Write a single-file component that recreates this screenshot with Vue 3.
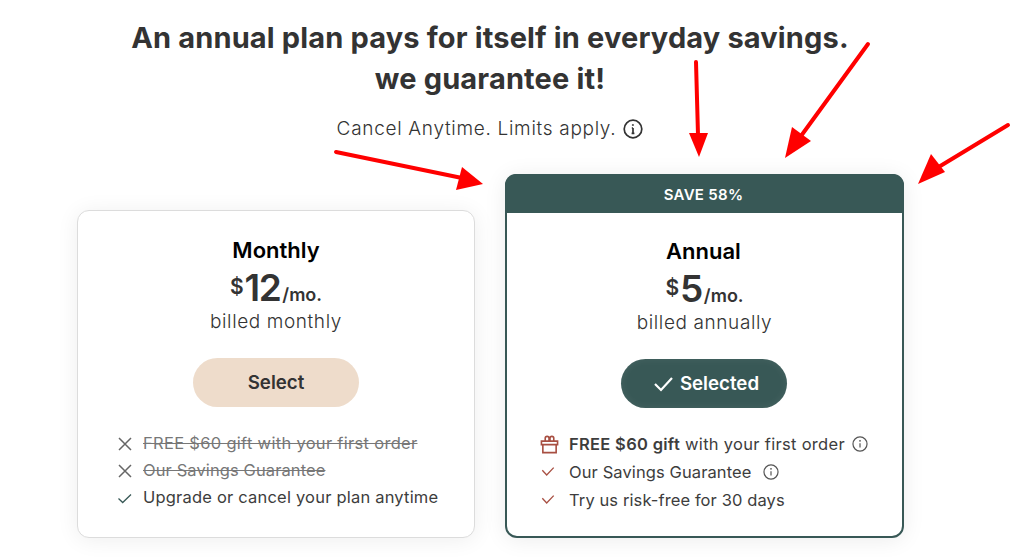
<script setup>
const monthly = [
  { icon: 'x', text: 'FREE $60 gift with your first order', cls: 'off' },
  { icon: 'x', text: 'Our Savings Guarantee', cls: 'off tight' },
  { icon: 'check', text: 'Upgrade or cancel your plan anytime', cls: 'mid' },
]
const arrows = [
  { line: 'M336 152 L462 178', head: '483,184 456,190 462,167' },
  { line: 'M696 62 L698 135', head: '699,157 689,133 708,133' },
  { line: 'M868 44 L801 136', head: '785,158 792,127 811,141' },
  { line: 'M1008 125 L937 168', head: '918,184 931,154 945,172' },
]
</script>

<template>
  <main class="page">
    <header class="intro">
      <h1>An annual plan pays for itself in everyday savings.<br />we guarantee it!</h1>
      <p class="limits">
        Cancel Anytime. Limits apply.
        <svg class="info big" viewBox="0 0 20 20"><circle cx="10" cy="10" r="8.8" /><path d="M10 9v5.4M8.6 14.4h2.8M8.8 9h1.2" /><circle class="dot" cx="9.9" cy="6" r="1.1" /></svg>
      </p>
    </header>

    <section class="plans">
      <article class="card monthly">
        <h2>Monthly</h2>
        <div class="price"><sup>$</sup><b>12</b><span>/mo.</span></div>
        <p class="billed">billed monthly</p>
        <button class="btn select">Select</button>
        <ul class="features">
          <li v-for="item in monthly" :key="item.text" :class="item.cls">
            <svg v-if="item.icon === 'x'" class="ico" viewBox="0 0 16 16"><path class="x" d="M2 2l12 12M14 2L2 14" /></svg>
            <svg v-else class="ico" viewBox="0 0 16 16"><path class="tick-green" d="M1.5 8.5l4.2 4L14 4.5" /></svg>
            <span>{{ item.text }}</span>
          </li>
        </ul>
      </article>

      <article class="card annual">
        <div class="save">SAVE 58%</div>
        <h2>Annual</h2>
        <div class="price"><sup>$</sup><b>5</b><span>/mo.</span></div>
        <p class="billed">billed annually</p>
        <button class="btn selected">
          <svg class="btn-tick" viewBox="0 0 20 16"><path d="M1.5 8l6 6L18.5 2" /></svg>
          Selected
        </button>
        <ul class="features red">
          <li>
            <svg class="ico gift" viewBox="0 0 20 20"><path d="M1.5 6.5h17v3.6h-17zM3 10.1v8.4h14v-8.4M5.5 6.5V3.5a2 2 0 0 1 4 0v3M10.5 6.5v-3a2 2 0 0 1 4 0v3" /></svg>
            <span><strong>FREE $60 gift</strong> with your first order</span>
            <svg class="info" viewBox="0 0 20 20"><circle cx="10" cy="10" r="8.8" /><path d="M10 9v5.5" /><circle class="dot" cx="10" cy="6" r="1.1" /></svg>
          </li>
          <li class="tight">
            <svg class="ico" viewBox="0 0 16 16"><path class="tick-red" d="M1.5 6l5 5.5L14.5 3" /></svg>
            <span>Our Savings Guarantee</span>
            <svg class="info wide" viewBox="0 0 20 20"><circle cx="10" cy="10" r="8.8" /><path d="M10 9v5.5" /><circle class="dot" cx="10" cy="6" r="1.1" /></svg>
          </li>
          <li class="tight">
            <svg class="ico" viewBox="0 0 16 16"><path class="tick-red" d="M1.5 6l5 5.5L14.5 3" /></svg>
            <span>Try us risk-free for 30 days</span>
          </li>
        </ul>
      </article>
    </section>

    <svg class="arrows" viewBox="0 0 1024 557">
      <g v-for="a in arrows" :key="a.line">
        <path :d="a.line" />
        <polygon :points="a.head" />
      </g>
    </svg>
  </main>
</template>

<style>
html, body { margin: 0; background: #fff; }
</style>

<style scoped>
.page {
  position: relative;
  width: 1024px;
  height: 557px;
  overflow: hidden;
  background: #fff;
  color: #333;
  font-family: Inter, "Liberation Sans", sans-serif;
}
.intro { width: 980px; text-align: center; padding-top: 17px; }
h1 {
  margin: 0;
  font-size: 29px;
  line-height: 41px;
  font-weight: 700;
  letter-spacing: 0.15px;
  color: #333;
}
.limits {
  margin: 18px 0 0;
  font-size: 19px;
  line-height: 24px;
  font-weight: 300;
  letter-spacing: 0.7px;
  display: flex;
  justify-content: center;
  align-items: center;
  gap: 7px;
}
.info { width: 16px; height: 16px; flex: none; fill: none; stroke: #555; stroke-width: 1.5; margin-left: 7px; }
.info.big { width: 20px; height: 20px; stroke: #333; stroke-width: 1.7; margin-left: 0; }
.info.wide { margin-left: 12px; }
.dot { fill: #555; stroke: none; }
.plans {
  position: absolute;
  left: 77px;
  bottom: 19px;
  display: flex;
  align-items: flex-end;
  gap: 30px;
}
.card {
  box-sizing: border-box;
  background: #fff;
  border-radius: 12px;
  text-align: center;
  display: flex;
  flex-direction: column;
  align-items: center;
}
.monthly {
  width: 398px;
  height: 328px;
  border: 1px solid #dcdcdc;
  box-shadow: 0 2px 22px rgba(0, 0, 0, 0.07);
  padding-top: 26px;
}
.annual {
  width: 399px;
  height: 364px;
  border: 2px solid #385856;
  box-shadow: 0 2px 22px rgba(0, 0, 0, 0.08);
  padding-right: 2px;
}
.annual .price, .annual .billed { margin-left: 2px; }
.save {
  align-self: stretch;
  margin: -2px -4px 25px -2px;
  padding-right: 2px;
  height: 39px;
  line-height: 41px;
  background: #385856;
  color: #fff;
  border-radius: 11px 11px 0 0;
  font-size: 15px;
  font-weight: 600;
  letter-spacing: 0.3px;
}
h2 {
  margin: 0;
  font-size: 22px;
  line-height: 27px;
  font-weight: 600;
  color: #000;
}
.price {
  margin-top: 6px;
  height: 36px;
  display: flex;
  align-items: baseline;
  justify-content: center;
  line-height: 36px;
  font-weight: 600;
  color: #333;
}
.price sup { font-size: 21px; line-height: 1; align-self: flex-start; margin-top: 6px; margin-right: 1px; }
.price b { font-size: 37px; font-weight: 600; letter-spacing: -1.5px; }
.price span { font-size: 18px; margin-left: 2px; }
.billed {
  margin: 4px 0 0;
  font-size: 19px;
  line-height: 24px;
  font-weight: 300;
  letter-spacing: 0.6px;
}
.btn {
  box-sizing: border-box;
  width: 166px;
  height: 49px;
  margin-top: 24px;
  padding: 0;
  border: 0;
  border-radius: 25px;
  font-family: inherit;
  font-size: 18.7px;
  font-weight: 600;
  display: flex;
  align-items: center;
  justify-content: center;
  gap: 6px;
}
.select { background: #eedccb; color: #333; }
.selected { background: #385856; color: #fff; padding-left: 5px; box-shadow: inset 0 0 8px rgba(255,255,255,0.08); }
.btn-tick { width: 21px; height: 16px; fill: none; stroke: #fff; stroke-width: 2.2; }
.features {
  list-style: none;
  margin: 23px 0 0;
  padding: 0;
  align-self: flex-start;
  text-align: left;
  font-size: 16.5px;
  line-height: 27px;
  letter-spacing: 0.3px;
}
.monthly .features { margin-left: 39px; }
.annual .features { margin-left: 33px; margin-top: 22px; line-height: 28px; }
.features li { display: flex; align-items: center; white-space: nowrap; color: #3d3d3d; }
.features li.mid { letter-spacing: 0.2px; }
.features li.tight { letter-spacing: 0.1px; }
.features.red strong { font-weight: 600; }
.features li.off span { text-decoration: line-through; color: #777; }
.ico { width: 16px; height: 16px; flex: none; margin-right: 10px; fill: none; }
.annual .ico { margin-right: 14px; margin-left: 1px; width: 14px; height: 14px; }
.annual .ico.gift { width: 19px; height: 19px; margin-left: 0; margin-right: 10px; stroke: #a84f42; stroke-width: 1.7; }
.x { stroke: #666; stroke-width: 1.5; }
.tick-green { stroke: #385856; stroke-width: 1.3; }
.tick-red { stroke: #a84f42; stroke-width: 1.5; }
.arrows { position: absolute; inset: 0; width: 1024px; height: 557px; pointer-events: none; }
.arrows path { stroke: #f00; stroke-width: 4; stroke-linecap: round; fill: none; }
.arrows polygon { fill: #f00; }
</style>
